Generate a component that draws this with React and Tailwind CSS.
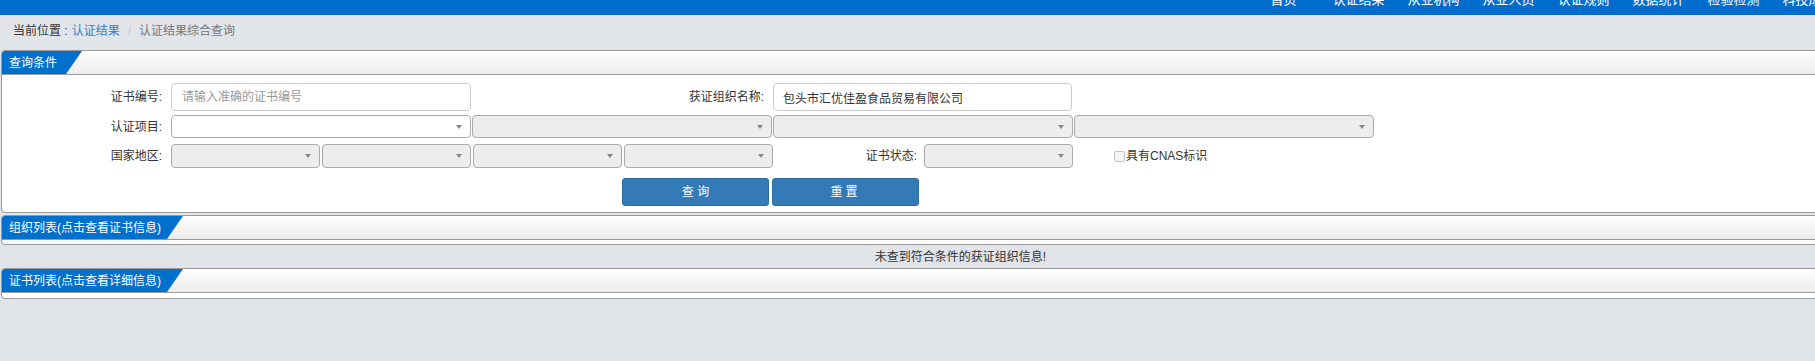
const navItems = [
  "首页",
  "认证结果",
  "从业机构",
  "从业人员",
  "认证规则",
  "数据统计",
  "检验检测",
  "科技成果",
];

const Panel = ({ title, tabClass, bodyClass, children, className = "" }) => (
  <div className={`border border-[#9a9a9a] rounded-[4px] bg-white ${className}`}>
    {/* header with slanted blue tab */}
    <div className="h-[24px] border-b border-[#9a9a9a] rounded-t-[4px] bg-linear-to-b from-white to-[#ececec]">
      <div
        className={`h-full flex items-center pl-[7px] bg-[#0070cd] text-white text-[12px] rounded-tl-[3px] [clip-path:polygon(0_0,100%_0,calc(100%-16px)_100%,0_100%)] ${tabClass}`}
      >
        {title}
      </div>
    </div>
    <div className={bodyClass}>{children}</div>
  </div>
);

const Select = ({ className = "", white = false }) => (
  <div
    className={`relative h-full border border-[#aaa] rounded-[4px] ${
      white ? "bg-white" : "bg-[#ededed]"
    } ${className}`}
  >
    <span className="absolute right-[8px] top-1/2 -translate-y-1/2 w-0 h-0 border-l-[3px] border-r-[3px] border-t-[4px] border-l-transparent border-r-transparent border-t-[#888]" />
  </div>
);

const Label = ({ className, children }) => (
  <div className={`text-right text-[12px] text-[#333] ${className}`}>{children}</div>
);

export default function App() {
  return (
    <div className="w-full min-h-[361px] overflow-hidden bg-[#e1e5e9] font-['Liberation_Sans','Noto_Sans_CJK_SC',sans-serif]">
      <div className="w-[1920px]">
        {/* top bar, scrolled so only the bottom of the nav shows */}
        <div className="h-[15px] bg-[#006dcc] overflow-hidden flex pl-[1246px]">
          {navItems.map((item) => (
            <div
              key={item}
              className="w-[75px] shrink-0 text-center text-white text-[13px] leading-[13px] -mt-[7px]"
            >
              {item}
            </div>
          ))}
        </div>

        {/* breadcrumb */}
        <div className="h-[31px] flex items-center pl-[13px] text-[12px]">
          <span className="text-[#333]">当前位置 : </span>
          <span className="text-[#3b7fc2] ml-[4px]">认证结果</span>
          <span className="text-[#ccc] px-[8px]">/</span>
          <span className="text-[#777]">认证结果综合查询</span>
        </div>

        <div className="pl-[1px] mt-[4px]">
          {/* query conditions */}
          <Panel title="查询条件" tabClass="w-[80px]" bodyClass="pt-[8px] pb-[6px]">
            <div className="flex items-center h-[28px]">
              <Label className="w-[160px]">证书编号:</Label>
              <input
                className="ml-[9px] w-[300px] h-full border border-[#ccc] rounded-[4px] px-[10px] text-[12px] text-[#333] placeholder:text-[#999] outline-none"
                placeholder="请输入准确的证书编号"
              />
              <Label className="w-[293px]">获证组织名称:</Label>
              <input
                className="ml-[9px] w-[299px] h-full border border-[#ccc] rounded-[4px] px-[9px] text-[12px] text-[#333] outline-none"
                defaultValue="包头市汇优佳盈食品贸易有限公司"
              />
            </div>

            <div className="flex items-center h-[23px] mt-[4px]">
              <Label className="w-[160px]">认证项目:</Label>
              <div className="ml-[9px] h-full flex gap-[1px]">
                <Select white className="w-[300px]" />
                <Select className="w-[300px]" />
                <Select className="w-[300px]" />
                <Select className="w-[300px]" />
              </div>
            </div>

            <div className="flex items-center h-[24px] mt-[6px]">
              <Label className="w-[160px]">国家地区:</Label>
              <div className="ml-[9px] h-full flex gap-[2px]">
                <Select className="w-[149px]" />
                <Select className="w-[149px]" />
                <Select className="w-[149px]" />
                <Select className="w-[149px]" />
              </div>
              <Label className="w-[144px]">证书状态:</Label>
              <Select className="ml-[7px] w-[149px]" />
              <div className="ml-[41px] flex items-center text-[12px] text-[#333]">
                <span className="w-[11px] h-[11px] border border-[#c4c4c4] rounded-[2px] bg-[#f6f6f6]" />
                <span className="ml-[1px]">具有CNAS标识</span>
              </div>
            </div>

            <div className="flex h-[28px] mt-[10px] pl-[620px] gap-[3px]">
              <button className="w-[147px] h-full rounded-[3px] bg-[#337ab7] border border-[#2e6da4] text-white text-[12px]">
                查 询
              </button>
              <button className="w-[147px] h-full rounded-[3px] bg-[#337ab7] border border-[#2e6da4] text-white text-[12px] tracking-[3px]">
                重置
              </button>
            </div>
          </Panel>

          {/* organisations */}
          <Panel
            title="组织列表(点击查看证书信息)"
            tabClass="w-[181px]"
            bodyClass="h-[4px]"
            className="mt-[2px]"
          />
          <div className="h-[23px] flex items-center justify-center text-[12px] text-[#333]">
            未查到符合条件的获证组织信息!
          </div>

          {/* certificates */}
          <Panel title="证书列表(点击查看详细信息)" tabClass="w-[181px]" bodyClass="h-[5px]" />
        </div>
      </div>
    </div>
  );
}
